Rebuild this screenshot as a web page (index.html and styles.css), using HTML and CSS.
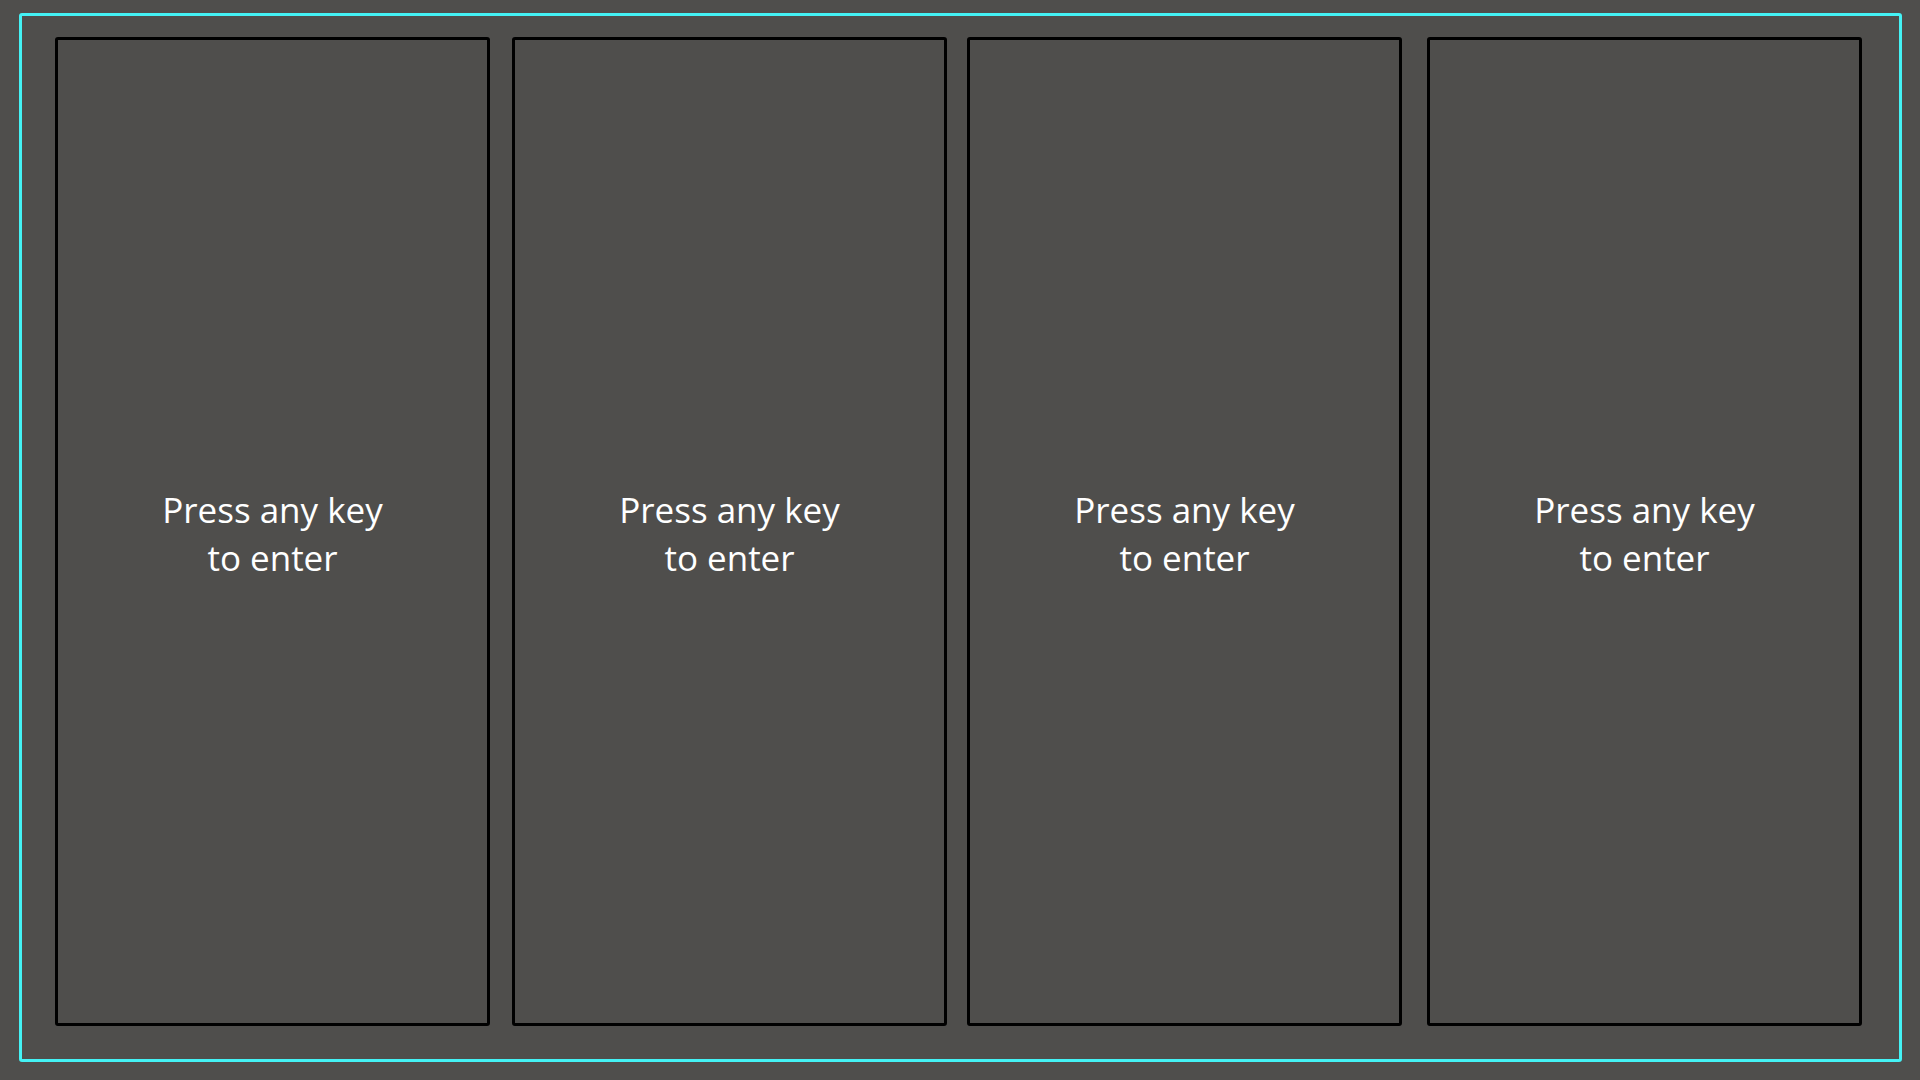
FILE: index.html
```html
<!DOCTYPE html>
<html lang="en">
<head>
    <meta charset="UTF-8">
    <meta name="viewport" content="width=device-width, initial-scale=1.0">
    <title>Player Select</title>
    <link rel="stylesheet" href="styles.css">
</head>
<body>
    <div class="lobby">
        <!-- one slot per player -->
        <div class="slot">
            <p class="slot-prompt">Press any key<br>to enter</p>
        </div>
        <div class="slot">
            <p class="slot-prompt">Press any key<br>to enter</p>
        </div>
        <div class="slot">
            <p class="slot-prompt">Press any key<br>to enter</p>
        </div>
        <div class="slot">
            <p class="slot-prompt">Press any key<br>to enter</p>
        </div>
    </div>
</body>
</html>
```

FILE: styles.css
```css
html, body {
    margin: 0;
    height: 100%;
}
body {
    background-color: #4f4e4c;
    font-family: "Open Sans", "Noto Sans", Arial, sans-serif;
    padding: 13px 18px 0 19px;
    box-sizing: border-box;
}
.lobby {
    box-sizing: border-box;
    width: 1883px;
    height: 1049px;
    border: 3px solid #44f2f5;
    border-radius: 3px;
    padding: 21px 37px 34px 33px;
    display: flex;
    gap: 22px;
}
.slot {
    box-sizing: border-box;
    width: 435px;
    height: 989px;
    border: 3px solid #000;
    border-radius: 3px;
    display: flex;
    align-items: center;
    justify-content: center;
}
.slot:nth-child(3) {
    margin-left: -2px;
}
.slot:nth-child(4) {
    margin-left: 3px;
}
.slot-prompt {
    margin: 0;
    padding-top: 5px;
    color: #fff;
    font-size: 35px;
    line-height: 48px;
    text-align: center;
}
```
